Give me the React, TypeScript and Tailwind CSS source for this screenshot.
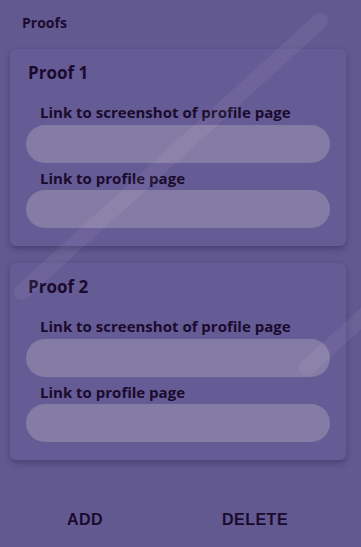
import React from 'react';

const fields = ['Link to screenshot of profile page', 'Link to profile page'];

const ProofCard: React.FC<{ index: number }> = ({ index }) => (
  <div className="mx-[10px] w-[336px] rounded-md bg-[#655b95] px-4 pt-[12px] pb-[18px] shadow-[0_3px_6px_rgba(30,20,60,0.35)]">
    <div className="ml-[2px] text-[17px] leading-6 font-bold text-[#1a0b2e]">Proof {index}</div>
    <div className="mt-[17px] flex flex-col">
      {fields.map((label, i) => (
        <div key={label} className={i === 0 ? '' : 'mt-[5px]'}>
          <div className="pl-[14px] text-[15px] leading-5 font-bold text-[#1a0b2e]">{label}</div>
          <input
            type="text"
            className={`${i === 0 ? 'mt-[3px]' : 'mt-[2px]'} block h-[38px] w-full rounded-full bg-[#857ca6] px-4 outline-none`}
          />
        </div>
      ))}
    </div>
  </div>
);

export default function App() {
  return (
    <div
      className="relative h-[547px] w-[361px] overflow-hidden bg-[#625991]"
      style={{ fontFamily: '"Open Sans", "Noto Sans", sans-serif' }}
    >
      <div className="pl-[22px] pt-[13px] text-[14px] leading-5 font-bold text-[#1a0b2e]">Proofs</div>

      <div className="mt-[16px] flex flex-col gap-[17px]">
        <ProofCard index={1} />
        <ProofCard index={2} />
      </div>

      <div className="mt-[42px] flex w-[340px]">
        {['ADD', 'DELETE'].map(b => (
          <button
            key={b}
            className="flex h-9 flex-1 items-center justify-center text-[16px] font-bold tracking-[0.5px] text-[#1a0b2e]"
            style={{ fontFamily: '"Liberation Sans", Arial, sans-serif' }}
          >
            {b}
          </button>
        ))}
      </div>

      {/* decorative stripes */}
      <svg className="pointer-events-none absolute inset-0" width="361" height="547">
        <g stroke="white" strokeOpacity="0.06" strokeWidth="16" strokeLinecap="round">
          <line x1="320" y1="21" x2="22" y2="292" />
          <line x1="390" y1="292" x2="307" y2="368" />
        </g>
      </svg>
    </div>
  );
}
